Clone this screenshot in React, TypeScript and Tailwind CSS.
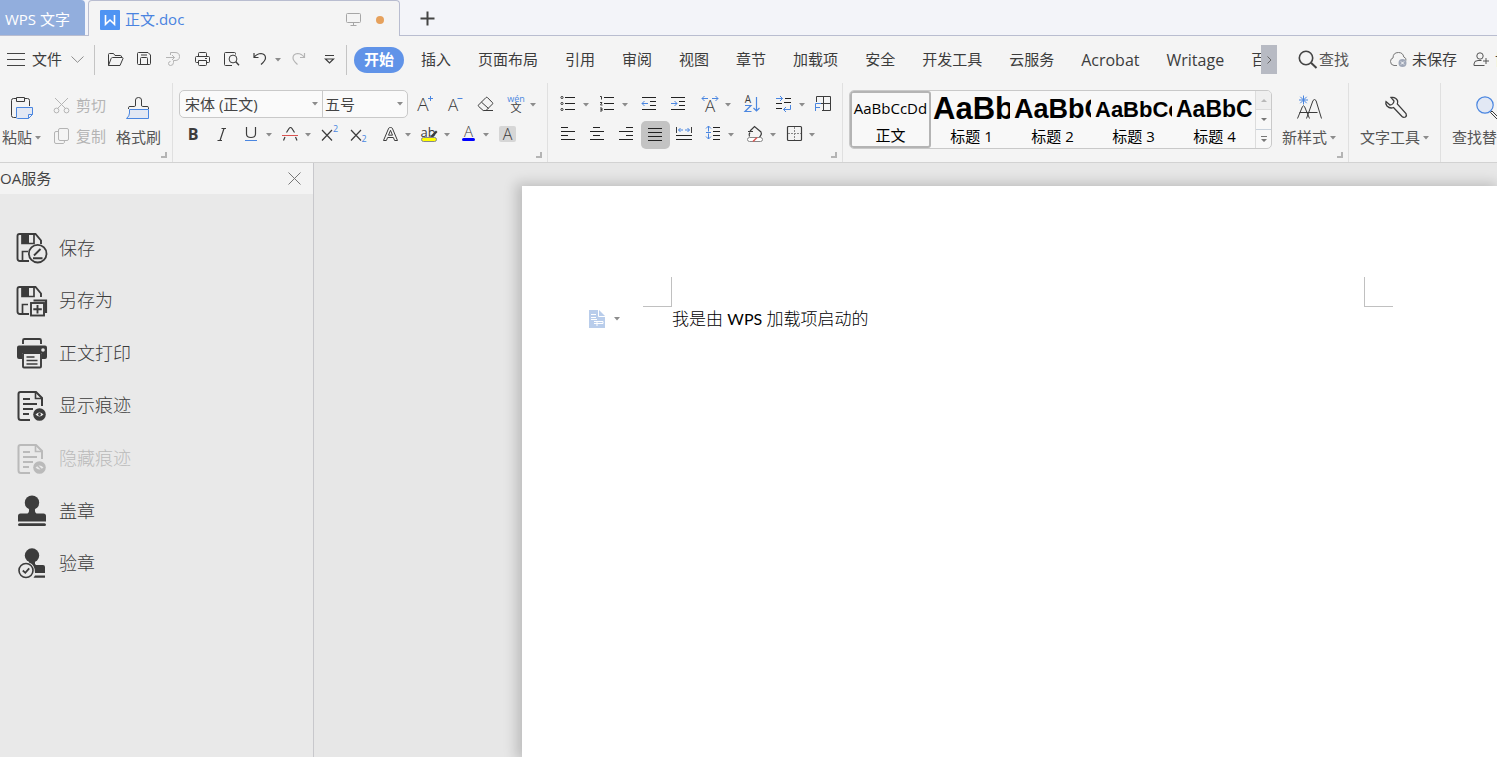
import React from "react";

const DARK = "#3c3c3c";
const BLUE = "#4a86e0";
const GREY = "#b4b4b4";

type IconProps = { size?: number; color?: string; sw?: number; children: React.ReactNode };

function Icon({ size = 21, color = DARK, sw = 1, children }: IconProps) {
  return (
    <svg
      width={size}
      height={size}
      viewBox={`0 0 ${size} ${size}`}
      fill="none"
      stroke={color}
      strokeWidth={sw}
      className="shrink-0"
      aria-hidden="true"
    >
      {children}
    </svg>
  );
}

function Glyph({ x, y, size, color = DARK, weight = 400, children }: { x: number; y: number; size: number; color?: string; weight?: number; children: string }) {
  return (
    <text x={x} y={y} fontSize={size} fill={color} stroke="none" fontWeight={weight} textAnchor="middle" fontFamily='"Open Sans","Noto Sans CJK SC",sans-serif'>
      {children}
    </text>
  );
}

function Caret() {
  return (
    <svg width="6" height="4" viewBox="0 0 6 4" className="shrink-0" aria-hidden="true">
      <path d="M0 0H6L3 3.5Z" fill="#8c8c8c" />
    </svg>
  );
}

function Tool({ label, caret, active, children }: { label: string; caret?: boolean; active?: boolean; children: React.ReactNode }) {
  return (
    <button type="button" aria-label={label} className={caret ? "flex h-[29px] w-[39px] items-center" : "flex h-[29px] w-[29px] items-center"}>
      <span className={active ? "flex h-7 w-[29px] items-center justify-center rounded-[5px] bg-[#c3c3c3]" : "flex h-[29px] w-[29px] shrink-0 items-center justify-center"}>
        {children}
      </span>
      {caret && <Caret />}
    </button>
  );
}

function Launcher() {
  return (
    <button type="button" aria-label="更多设置" className="absolute right-[5px] bottom-1 h-1.5 w-1.5 border-r-2 border-b-2 border-[#b4b4b4]" />
  );
}

const tabs = ["插入", "页面布局", "引用", "审阅", "视图", "章节", "加载项", "安全", "开发工具", "云服务", "Acrobat", "Writage", "百度网盘"];

function TitleBar() {
  return (
    <div className="flex h-9 shrink-0 bg-[#f3f4f9]">
      <button type="button" className="w-[85px] shrink-0 rounded-tr-[4px] border-b border-[#b9bdd0] bg-[#92aedd] pt-[3px] pl-[5px] text-left text-[15px] whitespace-nowrap text-white">
        WPS 文字
      </button>
      <div className="w-[3px] shrink-0 border-b border-[#b9bdd0]" />
      <div className="flex w-[312px] shrink-0 items-center rounded-t-[4px] border-x border-t border-[#b9bdd0] bg-[#f4f4f4] pt-0.5 pr-[15px] pl-[11px]">
        <svg width="20" height="20" viewBox="0 0 20 20" className="shrink-0" aria-hidden="true">
          <rect width="20" height="20" rx="1" fill="#4f94f3" />
          <path d="M5.5 5V14.3L10 10L14.5 14.3V5" fill="none" stroke="#fff" strokeWidth="1.6" />
        </svg>
        <span className="ml-[5px] text-[15px] text-[#4a83e0]">正文.doc</span>
        <span className="ml-auto flex items-center gap-[15px]">
          <svg width="15" height="15" viewBox="0 0 15 15" fill="none" stroke="#a6a6a6" aria-hidden="true">
            <rect x="0.5" y="1.5" width="14" height="9" rx="1" />
            <path d="M7.5 10.5V13.5M4.5 13.5H10.5" />
          </svg>
          <span className="h-2 w-2 rounded-full bg-[#e6a15c]" />
        </span>
      </div>
      <div className="flex flex-1 items-center border-b border-[#b9bdd0] pt-0.5 pl-5">
        <button type="button" aria-label="新建">
          <svg width="15" height="15" viewBox="0 0 15 15" stroke="#444" strokeWidth="2" aria-hidden="true">
            <path d="M7.5 0.5V14.5M0.5 7.5H14.5" />
          </svg>
        </button>
      </div>
    </div>
  );
}

function MenuBar() {
  return (
    <div className="flex h-[47px] shrink-0 items-center overflow-hidden text-[15px] whitespace-nowrap text-[#3c3c3c]">
      <button type="button" className="flex w-[94px] shrink-0 items-center pl-[7px]">
        <svg width="18" height="13" viewBox="0 0 18 13" stroke="#444" aria-hidden="true">
          <path d="M0 0.5H18M0 6.5H18M0 12.5H18" />
        </svg>
        <span className="ml-[7px]">文件</span>
        <svg width="13" height="7" viewBox="0 0 13 7" fill="none" stroke="#8c8c8c" className="ml-[9px]" aria-hidden="true">
          <path d="M0.5 0.5L6.5 6.3L12.5 0.5" />
        </svg>
      </button>
      <div className="h-[30px] w-px shrink-0 bg-[#c4c4c4]" />
      <div className="ml-1.5 flex shrink-0">
        <Tool label="打开">
          <Icon>
            <path d="M3.5 16.5V5.5Q3.5 4.5 4.5 4.5H8.5L10 6.5H15.5Q16.5 6.5 16.5 8V8.5M3.5 16.5H15L18 9.5Q18 8.5 17 8.5H7.5Q6.5 8.5 6 9.7Z" />
          </Icon>
        </Tool>
        <Tool label="保存">
          <Icon>
            <path d="M3.5 4.5Q3.5 3.5 4.5 3.5H14L16.5 6V14.5Q16.5 15.5 15.5 15.5H4.5Q3.5 15.5 3.5 14.5ZM6.5 15.5V9.5Q6.5 8.5 7.5 8.5H12.5Q13.5 8.5 13.5 9.5V15.5M7 6H13" />
          </Icon>
        </Tool>
        <Tool label="输出为PDF">
          <Icon color={GREY}>
            <path d="M7.5 3.5H12Q16.5 3.5 16.5 7.5Q16.5 11.5 12 11.5H10.5V13.5Q10.5 16.5 7.5 16.5Q5.5 16.5 5.5 14.5Q5.5 12.5 7.5 12.5M3 8.5H11.5M9 6L11.5 8.5L9 11M7.5 3.5V6" />
          </Icon>
        </Tool>
        <Tool label="打印">
          <Icon>
            <path d="M6.5 7.5V4.5Q6.5 3.5 7.5 3.5H13.5Q14.5 3.5 14.5 4.5V7.5M6.5 13.5H4.5Q3.5 13.5 3.5 12.5V8.5Q3.5 7.5 4.5 7.5H16.5Q17.5 7.5 17.5 8.5V12.5Q17.5 13.5 16.5 13.5H14.5M6.5 11.5H14.5V15.5Q14.5 16.5 13.5 16.5H7.5Q6.5 16.5 6.5 15.5ZM13 9.5H15" />
          </Icon>
        </Tool>
        <Tool label="打印预览">
          <Icon>
            <path d="M9 16.5H4.5Q3.5 16.5 3.5 15.5V4.5Q3.5 3.5 4.5 3.5H13.5Q14.5 3.5 14.5 4.5V5.5M6 16.5H11" />
            <circle cx="12" cy="10" r="3.9" />
            <path d="M14.8 12.8L18 16.2" strokeWidth="1.4" />
          </Icon>
        </Tool>
        <Tool label="撤销" caret>
          <Icon>
            <path d="M4 4V8.5H8.5M4 8.5Q7 4.5 11 4.5Q15.5 5 15.5 9Q15.5 11.5 11 15.5" strokeWidth="1.2" />
          </Icon>
        </Tool>
        <Tool label="恢复">
          <Icon color={GREY}>
            <path d="M15.5 4V8.5H11M15.5 8.5Q12.5 4.5 8.5 4.5Q4 5 4 9Q4 11.5 8.5 15.5" strokeWidth="1.2" />
          </Icon>
        </Tool>
        <Tool label="自定义快速访问工具栏">
          <Icon>
            <path d="M7 6.5H16M7.5 10L11.5 14L15.5 10Z" strokeWidth="1.2" />
          </Icon>
        </Tool>
      </div>
      <div className="ml-[3px] h-[30px] w-px shrink-0 bg-[#c4c4c4]" />
      <nav className="ml-[7px] flex min-w-0 flex-1 items-center gap-[27px] overflow-hidden">
        <button type="button" className="-mr-2.5 h-[26px] shrink-0 rounded-full bg-[#6093e8] px-2.5 font-bold text-white">
          开始
        </button>
        {tabs.map((t) => (
          <button type="button" key={t} className={/^[A-Z]/.test(t) ? "shrink-0 text-base" : "shrink-0"}>
            {t}
          </button>
        ))}
      </nav>
      <button type="button" aria-label="更多选项卡" className="flex h-[29px] w-4 shrink-0 items-center justify-center bg-[#b7bac3]">
        <svg width="5" height="8" viewBox="0 0 5 8" fill="none" stroke="#666" aria-hidden="true">
          <path d="M0.5 0.5L4 4L0.5 7.5" />
        </svg>
      </button>
      <div className="flex w-[220px] shrink-0 items-center overflow-hidden">
        <button type="button" className="ml-[21px] flex shrink-0 items-center text-[#555]">
          <Icon color="#444">
            <circle cx="8" cy="9" r="6.7" strokeWidth="1.6" />
            <path d="M13 13.8L18.5 19" strokeWidth="2" />
          </Icon>
          查找
        </button>
        <button type="button" className="ml-10 flex shrink-0 items-center gap-1">
          <Icon size={19} color="#777">
            <path d="M8 15.5H5Q1.5 15 1.5 11.5Q1.5 8.5 4 8Q4 2.5 9.5 2.5Q14 2.5 14.8 7Q17.5 8 17 10.5" />
            <circle cx="13.5" cy="13" r="4" fill="#a0a8b8" stroke="none" />
            <path d="M12 11.5L15 14.5M15 11.5L12 14.5" stroke="#fff" />
          </Icon>
          未保存
        </button>
        <button type="button" className="ml-4 flex shrink-0 items-center gap-[5px]">
          <Icon size={17} color="#555">
            <circle cx="7" cy="5" r="3.2" />
            <path d="M1 14.5V13Q1 9.5 5 9.5H8.5M1 14.5H11.5M13 7V13M10 10H16" />
          </Icon>
          协作
        </button>
      </div>
    </div>
  );
}

const styleItems = [
  { name: "标题 1", sample: "AaBbC", cls: "text-[31px]" },
  { name: "标题 2", sample: "AaBbC", cls: "text-[27px]" },
  { name: "标题 3", sample: "AaBbCc", cls: "text-[22px]" },
  { name: "标题 4", sample: "AaBbC", cls: "text-[23px]" },
];

function Lines({ rows }: { rows: [number, number, number][] }) {
  return <path d={rows.map(([a, b, y]) => `M${a} ${y}H${b}`).join("")} stroke="#222" />;
}

function Ribbon() {
  return (
    <div className="flex h-20 shrink-0 overflow-hidden border-b border-[#d2d2d2] text-[15px] whitespace-nowrap text-[#555]">
      <section className="relative flex w-[173px] shrink-0 border-r border-[#e0e0e0] pt-[7px]">
        <button type="button" className="flex w-[43px] flex-col items-center justify-start pt-[5px]">
          <Icon size={27}>
            <path d="M8.5 3.5H5.5Q3.5 3.5 3.5 5.5V20.5Q3.5 22.5 5.5 22.5H8M16.5 3.5H19.5Q21.5 3.5 21.5 5.5V11M8.5 2.5H16.5V6.5H8.5Z" />
            <path d="M8.5 12.5H24.5V19.5L20.5 23.5H9.5Q8.5 23.5 8.5 22.5ZM24.5 19.5H20.5V23.5" fill="#e2e8f4" stroke={BLUE} />
          </Icon>
          <span className="mt-0.5 flex h-[27px] items-center gap-[3px]">
            粘贴
            <Caret />
          </span>
        </button>
        <div className="ml-2 flex flex-col gap-px text-[#b4b4b4]">
          <button type="button" className="flex h-[30px] items-center gap-1">
            <Icon color={GREY}>
              <path d="M4 3L15 14M17 3L6 14" />
              <circle cx="5.5" cy="15.5" r="2.4" />
              <circle cx="15.5" cy="15.5" r="2.4" />
            </Icon>
            剪切
          </button>
          <button type="button" className="flex h-[30px] items-center gap-1">
            <Icon color={GREY}>
              <rect x="7.5" y="2.5" width="10" height="12" rx="1.5" />
              <path d="M7.5 5.5H5Q3.5 5.5 3.5 7V16Q3.5 17.5 5 17.5H12.5Q13.5 17.5 13.5 14.5" />
            </Icon>
            复制
          </button>
        </div>
        <button type="button" className="ml-2.5 flex flex-col items-center justify-start pt-[5px]">
          <Icon size={27}>
            <path d="M3.5 14V12.5Q3.5 11.5 5 11.5H9.5Q10.5 11.5 10.5 10V5Q10.5 2.5 13.5 2.5Q16.5 2.5 16.5 5V10Q16.5 11.5 17.5 11.5H22Q23.5 11.5 23.5 12.5V14" />
            <path d="M4.5 14.5H23.5V23.5H1.5Q4.5 21 4.5 18Z" fill="#e2e8f4" stroke={BLUE} />
          </Icon>
          <span className="mt-0.5 flex h-[27px] items-center">格式刷</span>
        </button>
        <Launcher />
      </section>

      <section className="relative w-[375px] shrink-0 border-r border-[#e0e0e0] pt-[7px] pl-[6px]">
        <div className="flex">
          <div className="flex h-7 w-[229px] shrink-0 overflow-hidden rounded-[5px] border border-[#c9c9c9] bg-[#fafafa] text-[#444]">
            <label className="relative flex w-[143px] items-center border-r border-[#c9c9c9]">
              <select aria-label="字体" className="h-full w-full appearance-none pl-[5px] outline-none">
                <option>宋体 (正文)</option>
              </select>
              <span className="absolute right-1">
                <Caret />
              </span>
            </label>
            <label className="relative flex flex-1 items-center">
              <select aria-label="字号" className="h-full w-full appearance-none pl-0.5 outline-none">
                <option>五号</option>
              </select>
              <span className="absolute right-1">
                <Caret />
              </span>
            </label>
          </div>
          <div className="ml-[3px] flex gap-px">
            <Tool label="增大字号">
              <Icon>
                <Glyph x={8} y={17} size={19} weight={300}>A</Glyph>
                <path d="M13 4.5H18M15.5 2V7" stroke={BLUE} />
              </Icon>
            </Tool>
            <Tool label="减小字号">
              <Icon>
                <Glyph x={8} y={17} size={17} weight={300}>A</Glyph>
                <path d="M12.5 4.5H17.5" stroke={BLUE} />
              </Icon>
            </Tool>
            <Tool label="清除格式">
              <Icon>
                <path d="M3.5 11L11 3.5Q11.7 3 12.4 3.5L17.5 8.7Q18 9.5 17.5 10L11 16.5H8.2L3.5 12.3Q3 11.6 3.5 11ZM6.5 8.2L13.5 14.5M10 16.5H18" />
              </Icon>
            </Tool>
            <Tool label="拼音指南" caret>
              <Icon>
                <Glyph x={11} y={8} size={9} color={BLUE}>wén</Glyph>
                <Glyph x={11} y={18} size={11}>文</Glyph>
              </Icon>
            </Tool>
          </div>
        </div>
        <div className="mt-px flex gap-[3px]">
          <div className="flex">
            <Tool label="加粗"><Icon><Glyph x={10} y={16} size={16} weight={700}>B</Glyph></Icon></Tool>
            <Tool label="倾斜"><Icon><path d="M9.5 4.5H14M5.5 16.5H10M12 4.5L8 16.5" strokeWidth="1.2" /></Icon></Tool>
            <Tool label="下划线" caret>
              <Icon><path d="M5.5 3V10Q5.5 13.5 10 13.5Q14.5 13.5 14.5 10V3" strokeWidth="1.2" /><path d="M4 16.5H16" stroke={BLUE} /></Icon>
            </Tool>
            <Tool label="删除线" caret>
              <Icon><path d="M6.5 8.5L9 4.5Q10.5 2.5 12 4.5L14.5 8.5M5 13L3.5 16.5M15.5 13L17 16.5" strokeWidth="1.2" /><path d="M2 11.5H18" stroke="#d9534f" /></Icon>
            </Tool>
            <Tool label="上标"><Icon><path d="M3 6L13 16.5M13 6L3 16.5" strokeWidth="1.2" /><Glyph x={16.5} y={8} size={9} color={BLUE}>2</Glyph></Icon></Tool>
            <Tool label="下标"><Icon><path d="M3 6L13 16.5M13 6L3 16.5" strokeWidth="1.2" /><Glyph x={16} y={18} size={9} color={BLUE}>2</Glyph></Icon></Tool>
          </div>
          <div className="flex">
            <Tool label="文字效果" caret>
              <Icon>
                <path d="M3.5 16.5L8.7 4.2Q9.2 3.5 10.5 3.5Q11.8 3.5 12.3 4.2L17.5 16.5H14.6L13.4 13.5H7.6L6.4 16.5ZM8.5 11.2L10.5 6.3L12.5 11.2Z" />
              </Icon>
            </Tool>
            <Tool label="突出显示" caret>
              <Icon>
                <Glyph x={9} y={13} size={13}>ab</Glyph>
                <path d="M11.5 12L17 6.5L18.5 8L14 13Z" fill={DARK} stroke="none" />
                <rect x="2.5" y="13.5" width="15" height="4" rx="2" fill="#ffff00" stroke="#888" />
              </Icon>
            </Tool>
            <Tool label="字体颜色" caret>
              <Icon>
                <Glyph x={10.5} y={13} size={15} weight={300}>A</Glyph>
                <rect x="4" y="14" width="13" height="3" rx="1.5" fill="#0000ff" stroke="none" />
              </Icon>
            </Tool>
            <Tool label="字符底纹">
              <Icon>
                <rect x="2" y="2" width="17" height="16" rx="2" fill="#d6d6d6" stroke="none" />
                <Glyph x={10.5} y={16} size={16} weight={300}>A</Glyph>
              </Icon>
            </Tool>
          </div>
        </div>
        <Launcher />
      </section>

      <section className="relative w-[295px] shrink-0 border-r border-[#e0e0e0] pt-[7px] pl-[6px]">
        <div className="flex gap-[3px]">
          <div className="flex">
            <Tool label="项目符号" caret>
              <Icon>
                <Lines rows={[[7, 17, 3.5], [7, 17, 9.5], [7, 17, 15.5]]} />
                <circle cx="4" cy="3.5" r="1.1" /><circle cx="4" cy="9.5" r="1.1" /><circle cx="4" cy="15.5" r="1.1" />
              </Icon>
            </Tool>
            <Tool label="编号" caret>
              <Icon>
                <Lines rows={[[7, 17, 3.5], [7, 17, 9.5], [7, 17, 15.5]]} />
                <path d="M3 2.5H4.5V5.5M3 8.5H5L3.5 11H5.5M3 14H5V17H3M3.5 15.5H5" />
              </Icon>
            </Tool>
          </div>
          <div className="flex">
            <Tool label="减少缩进">
              <Icon><Lines rows={[[3, 17, 3.5], [11, 17, 7.5], [11, 17, 11.5], [3, 17, 15.5]]} /><path d="M3 9.5H9M5.5 7L3 9.5L5.5 12" stroke={BLUE} /></Icon>
            </Tool>
            <Tool label="增加缩进">
              <Icon><Lines rows={[[3, 17, 3.5], [11, 17, 7.5], [11, 17, 11.5], [3, 17, 15.5]]} /><path d="M3 9.5H9M6.5 7L9 9.5L6.5 12" stroke={BLUE} /></Icon>
            </Tool>
          </div>
          <Tool label="中文版式" caret>
            <Icon><Glyph x={10} y={18} size={17} weight={300}>A</Glyph><path d="M2 4.5H8M4.5 2L2 4.5L4.5 7M12 4.5H18M15.5 2L18 4.5L15.5 7" stroke={BLUE} /></Icon>
          </Tool>
          <Tool label="排序">
            <Icon><Glyph x={6} y={9} size={10}>A</Glyph><path d="M3 11.5H9L3 17.5H9.5M14.5 3V17M11.5 14L14.5 17L17.5 14" stroke={BLUE} strokeWidth="1.2" /></Icon>
          </Tool>
          <div className="flex">
            <Tool label="显示标记" caret>
              <Icon><Lines rows={[[11, 17, 4.5], [2, 8, 9.5], [10, 17, 8.5], [2, 8, 14.5]]} /><path d="M2 4.5H8.5M6 2L8.5 4.5L6 7M16.5 11V15.5H9.5M12 13L9.5 15.5L12 18" stroke={BLUE} /></Icon>
            </Tool>
            <Tool label="制表位">
              <Icon><path d="M3.5 8V2.5H17.5V16.5H9M10.5 2.5V16.5M3.5 9.5H17.5" /><path d="M2.5 17V9.5H8M2.5 13.5H7" stroke={BLUE} /></Icon>
            </Tool>
          </div>
        </div>
        <div className="mt-px flex gap-[3px]">
          <div className="flex">
            <Tool label="左对齐"><Icon><Lines rows={[[3, 10, 3.5], [3, 17, 7.5], [3, 10, 11.5], [3, 17, 15.5]]} /></Icon></Tool>
            <Tool label="居中"><Icon><Lines rows={[[6, 13, 3.5], [3, 17, 7.5], [6, 13, 11.5], [3, 17, 15.5]]} /></Icon></Tool>
            <Tool label="右对齐"><Icon><Lines rows={[[10, 17, 3.5], [3, 17, 7.5], [10, 17, 11.5], [3, 17, 15.5]]} /></Icon></Tool>
            <Tool label="两端对齐" active><Icon><Lines rows={[[3, 17, 4.5], [3, 17, 8.5], [3, 17, 12.5], [3, 17, 16.5]]} /></Icon></Tool>
            <Tool label="分散对齐">
              <Icon><path d="M2.5 3V9M17.5 3V9" /><Lines rows={[[2, 18, 11.5], [2, 18, 15.5]]} /><path d="M4.5 6H9M6.5 4L4.5 6L6.5 8M11 6H15.5M13.5 4L15.5 6L13.5 8" stroke={BLUE} /></Icon>
            </Tool>
            <Tool label="行距" caret>
              <Icon><Lines rows={[[10, 17, 3.5], [10, 17, 7.5], [10, 17, 11.5], [10, 17, 15.5]]} /><path d="M5.5 2V7.5M3 4.5L5.5 2L8 4.5M5.5 9.5V15M3 12.5L5.5 15L8 12.5M3 8.5H8" stroke={BLUE} /></Icon>
            </Tool>
          </div>
          <div className="flex">
            <Tool label="底纹颜色" caret>
              <Icon>
                <path d="M3 7.5H8M5 7L9.5 2.5L16 8Q17 9.5 15.5 12L14.5 13M4.5 12.5Q3.5 10 5 8.5" strokeWidth="1.2" />
                <rect x="2.5" y="13.5" width="15" height="4" rx="2" fill="#fff" stroke="#888" />
                <path d="M8 17.5L12 13.5" stroke="#d9534f" strokeWidth="1.4" />
              </Icon>
            </Tool>
            <Tool label="边框" caret>
              <Icon><rect x="3.5" y="2.5" width="14" height="14" rx="1" strokeWidth="1.2" /><path d="M10.5 3V16M4 9.5H17" stroke="#888" strokeDasharray="2 1" /></Icon>
            </Tool>
          </div>
        </div>
        <Launcher />
      </section>

      <section className="relative flex w-[506px] shrink-0 border-r border-[#e0e0e0] pt-[7px] pl-[6px]">
        <div className="flex h-[59px] w-[423px] shrink-0 overflow-hidden rounded-[5px] border border-[#c9c9c9] bg-[#f8f8f8] text-black">
          <button type="button" className="flex w-[81px] shrink-0 flex-col items-center overflow-hidden rounded-[3px] border-2 border-[#b4b4b4]">
            <span className="flex h-8 items-center">AaBbCcDd</span>
            <span className="leading-[22px]">正文</span>
          </button>
          {styleItems.map((s) => (
            <button type="button" key={s.name} className="flex w-[81px] shrink-0 flex-col items-center px-0.5 pt-0.5">
              <span className={`flex h-8 w-full items-center overflow-hidden font-['Liberation_Sans',Arial,sans-serif] font-bold ${s.cls}`}>{s.sample}</span>
              <span className="leading-[22px]">{s.name}</span>
            </button>
          ))}
          <div className="flex flex-1 flex-col border-l border-[#dcdcdc]">
            <button type="button" aria-label="上一行" className="flex flex-1 items-center justify-center border-b border-[#dcdcdc] bg-[#efefef]">
              <svg width="6" height="3" viewBox="0 0 6 3" aria-hidden="true"><path d="M0 3H6L3 0Z" fill="#b8b8b8" /></svg>
            </button>
            <button type="button" aria-label="下一行" className="flex flex-1 items-center justify-center border-b border-[#c9d2dc]">
              <svg width="6" height="3" viewBox="0 0 6 3" aria-hidden="true"><path d="M0 0H6L3 3Z" fill="#777" /></svg>
            </button>
            <button type="button" aria-label="全部样式" className="flex flex-1 items-center justify-center">
              <svg width="6" height="6" viewBox="0 0 6 6" aria-hidden="true"><path d="M0 0H6V1H0ZM0 3H6L3 6Z" fill="#777" /></svg>
            </button>
          </div>
        </div>
        <button type="button" className="ml-2.5 flex flex-col items-start justify-start pt-[5px]">
          <span className="pl-[14px]">
            <Icon size={27}>
              <path d="M1.5 23.5L6.5 11.5Q7.5 10 8.5 11.5L13.5 23.5M3.5 17.5H21.5M10.5 23.5L17 5.5Q18.5 3.5 20 5.5L25.5 23.5" />
              <path d="M7.5 0.5V9.5M3 5H12M4.3 1.8L10.7 8.2M10.7 1.8L4.3 8.2" stroke={BLUE} />
            </Icon>
          </span>
          <span className="mt-0.5 flex h-[27px] items-center gap-[3px]">
            新样式
            <Caret />
          </span>
        </button>
        <Launcher />
      </section>

      <section className="w-[92px] shrink-0 border-r border-[#e0e0e0] pt-[7px] pl-[11px]">
        <button type="button" className="flex flex-col items-start justify-start pt-[5px]">
          <span className="pl-[22px]">
            <Icon size={27} sw={1.3}>
              <path d="M9 2.5Q13.5 1.5 15.5 5.5Q16 7.5 15.3 9L24 18.5Q25 20.5 23.5 22Q21.5 23 20 21.5L11.5 12.5Q8 14 5 11Q3.2 8.5 4 6.5L8 10Q10 10 11 8.5Q12 7 12 6Z" />
            </Icon>
          </span>
          <span className="mt-0.5 flex h-[27px] items-center gap-[3px]">
            文字工具
            <Caret />
          </span>
        </button>
      </section>

      <section className="min-w-0 flex-1 overflow-hidden pt-[7px] pl-[11px]">
        <button type="button" className="flex flex-col items-start justify-start pt-[5px]">
          <span className="pl-[22px]">
            <Icon size={27}>
              <circle cx="11" cy="10" r="8.2" fill="#e2e8f4" stroke={BLUE} strokeWidth="1.2" />
              <path d="M16.5 17.5L18 16L25 23L23.5 24.5Z" />
            </Icon>
          </span>
          <span className="mt-0.5 flex h-[27px] items-center">查找替换</span>
        </button>
      </section>
    </div>
  );
}

function SaveBase() {
  return (
    <>
      <path d="M13 29H4Q1.5 29 1.5 26.5V4Q1.5 2 3.5 2H19.5L25 8.5V12" strokeWidth="1.9" />
      <path d="M6 2V11.5H18V2" strokeWidth="1.7" />
      <rect x="6" y="2" width="7" height="9" fill="currentColor" stroke="none" />
      <path d="M6.5 29V19.5H12" strokeWidth="1.7" />
    </>
  );
}

function DocBase() {
  return (
    <>
      <path d="M14 30H5Q2.5 30 2.5 27.5V4Q2.5 2 4.5 2H20L26 8V16" strokeWidth="2" />
      <path d="M19.5 2V8.5H26" strokeWidth="1.6" />
      <path d="M7 9H14M7 14H21M7 19H17M7 24H13" strokeWidth="1.9" />
      <circle cx="23.5" cy="24.5" r="6.3" fill="currentColor" stroke="none" />
    </>
  );
}

function PaneIcon({ kind }: { kind: string }) {
  return (
    <svg width="32" height="32" viewBox="0 0 32 32" fill="none" stroke="currentColor" className="shrink-0" aria-hidden="true">
      {kind === "save" && (
        <>
          <SaveBase />
          <circle cx="21.7" cy="21.7" r="8.8" strokeWidth="1.8" />
          <path d="M17 26.3H26.5M18 23.5L24.5 17" strokeWidth="1.9" />
        </>
      )}
      {kind === "saveas" && (
        <>
          <SaveBase />
          <path d="M17.5 15.5H30V28" strokeWidth="2.2" />
          <rect x="15" y="18" width="13" height="12.5" strokeWidth="1.9" />
          <path d="M21.5 20V28.5M17.3 24.2H25.8" strokeWidth="1.9" />
        </>
      )}
      {kind === "print" && (
        <>
          <path d="M7 7V3.5Q7 2 8.5 2H23.5Q25 2 25 3.5V7" strokeWidth="1.9" />
          <path d="M3 8.5H29Q31 8.5 31 10.5V20Q31 22 29 22H26V16H6V22H3Q1 22 1 20V10.5Q1 8.5 3 8.5Z" fill="currentColor" stroke="none" />
          <circle cx="27" cy="13" r="1.8" fill="#e9e9e9" stroke="none" />
          <rect x="7" y="16" width="18" height="14.5" rx="1" strokeWidth="1.9" />
          <path d="M10.5 20H18.5M10.5 23.5H21.5M10.5 27H21.5" strokeWidth="1.7" />
        </>
      )}
      {kind === "show" && (
        <>
          <DocBase />
          <path d="M19.5 24.5Q23.5 20.5 27.5 24.5Q23.5 28.5 19.5 24.5Z" fill="#e9e9e9" stroke="none" />
          <circle cx="23.5" cy="24.5" r="1.4" fill="currentColor" stroke="none" />
        </>
      )}
      {kind === "hide" && (
        <>
          <DocBase />
          <path d="M19.5 24.5Q23.5 20.5 27.5 24.5Q23.5 28.5 19.5 24.5Z" fill="#e9e9e9" stroke="none" />
          <path d="M20.5 21.5L26.5 27.5" strokeWidth="1.4" />
        </>
      )}
      {kind === "stamp" && (
        <>
          <circle cx="16" cy="7.7" r="7.2" fill="currentColor" stroke="none" />
          <path d="M13 13H19Q18.5 17.5 20.5 18.5H27.5Q30 18.5 30 21V26.5H2V21Q2 18.5 4.5 18.5H11.5Q13.5 17.5 13 13ZM3.5 28.2H28.5Q30 28.2 30 29.7Q30 31 28.5 31H3.5Q2 31 2 29.7Q2 28.2 3.5 28.2Z" fill="currentColor" stroke="none" />
        </>
      )}
      {kind === "verify" && (
        <>
          <circle cx="16" cy="7.5" r="7.2" fill="currentColor" stroke="none" />
          <path d="M13 13H19Q18.5 16 20 17H27Q29 17 29 19V25H19Q19.5 17 13 14.5ZM19 27.5H29V29.8H17.5Z" fill="currentColor" stroke="none" />
          <circle cx="10" cy="22.5" r="7" fill="#e9e9e9" strokeWidth="1.6" />
          <path d="M6.8 22.5L9.3 24.8L13.2 20.3" strokeWidth="1.8" />
        </>
      )}
    </svg>
  );
}

const paneItems = [
  { label: "保存", kind: "save" },
  { label: "另存为", kind: "saveas" },
  { label: "正文打印", kind: "print" },
  { label: "显示痕迹", kind: "show" },
  { label: "隐藏痕迹", kind: "hide", disabled: true },
  { label: "盖章", kind: "stamp" },
  { label: "验章", kind: "verify" },
];

function TaskPane() {
  return (
    <aside className="w-[314px] shrink-0 border-r border-[#c8c8cc] bg-[#e9e9e9]">
      <header className="flex h-[31px] items-center justify-between bg-[#f3f3f3] pr-3 text-[15px] text-[#444]">
        OA服务
        <button type="button" aria-label="关闭">
          <svg width="13" height="13" viewBox="0 0 13 13" stroke="#777" aria-hidden="true">
            <path d="M0.5 0.5L12.5 12.5M12.5 0.5L0.5 12.5" />
          </svg>
        </button>
      </header>
      <ul className="grid h-[396px] grid-rows-7 pt-7">
        {paneItems.map((p) => (
          <li key={p.kind} className="flex">
            <button
              type="button"
              disabled={p.disabled}
              className={`flex items-center gap-[11px] pl-4 text-[18px] font-light ${p.disabled ? "text-[#bababa]" : "text-[#3c3c3c]"}`}
            >
              <PaneIcon kind={p.kind} />
              {p.label}
            </button>
          </li>
        ))}
      </ul>
    </aside>
  );
}

function DocumentArea() {
  return (
    <main className="flex min-w-0 flex-1 overflow-hidden bg-[#e7e7e7] pt-[23px] pl-[208px]">
      <article className="min-w-0 flex-1 bg-white pt-[91px] pr-[104px] shadow-[-3px_0_12px_3px_rgba(0,0,0,0.18)]">
        <div className="flex justify-between pl-[121px]">
          <span className="h-[30px] w-[29px] border-r border-b border-[#c0c0c0]" />
          <span className="h-[30px] w-[29px] border-b border-l border-[#c0c0c0]" />
        </div>
        <div className="flex h-6 items-center pl-[67px]">
          <button type="button" aria-label="段落布局" className="flex w-[83px] items-center gap-[9px]">
            <svg width="16" height="18" viewBox="0 0 16 18" aria-hidden="true">
              <path d="M0 0H10L16 6V18H0Z" fill="#b9cdeb" />
              <path d="M9.5 0V6.5H16M2 4.5H7M2 7.5H7M2 9.5H8M5 11.5H14V13.5H5M8 11V16" stroke="#fff" fill="none" />
            </svg>
            <Caret />
          </button>
          <p className="font-['Lato','Noto_Sans_CJK_SC',sans-serif] text-[17px] text-black">
            <span className="font-light">我是由</span> <span className="text-[16px]">WPS</span> <span className="font-light">加载项启动的</span>
          </p>
        </div>
      </article>
    </main>
  );
}

export default function App() {
  return (
    <div className="flex h-screen flex-col overflow-hidden bg-[#f4f4f4] font-['Open_Sans','Noto_Sans_CJK_SC',sans-serif]">
      <TitleBar />
      <MenuBar />
      <Ribbon />
      <div className="flex min-h-0 flex-1">
        <TaskPane />
        <DocumentArea />
      </div>
    </div>
  );
}
